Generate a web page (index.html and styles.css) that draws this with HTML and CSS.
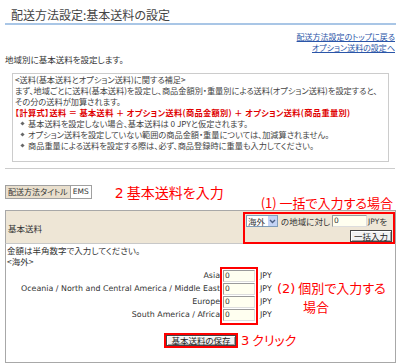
FILE: index.html
```html
<!DOCTYPE html>
<html lang="ja">
<head>
<meta charset="utf-8">
<title>配送方法設定:基本送料の設定</title>
<link rel="stylesheet" href="styles.css">
</head>
<body>
<div class="page">
  <h1 class="title">配送方法設定:基本送料の設定</h1>
  <div class="links">
    <a href="#">配送方法設定のトップに戻る</a><br>
    <a href="#">オプション送料の設定へ</a>
  </div>
  <p class="intro">地域別に基本送料を設定します。</p>
  <div class="note">
    <p>&lt;送料(基本送料とオプション送料)に関する補足&gt;</p>
    <p>まず、地域ごとに送料(基本送料)を設定し、商品金額別・重量別による送料(オプション送料)を設定すると、</p>
    <p>その分の送料が加算されます。</p>
    <p class="formula">【計算式】送料 ＝ 基本送料 ＋ オプション送料(商品金額別) ＋ オプション送料(商品重量別)</p>
    <ul class="bullets">
      <li>基本送料を設定しない場合、基本送料は 0 JPYと仮定されます。</li>
      <li>オプション送料を設定していない範囲の商品金額・重量については、加減算されません。</li>
      <li>商品重量による送料を設定する際は、必ず、商品登録時に重量も入力してください。</li>
    </ul>
  </div>
  <hr class="sep">
  <div class="tabrow">
    <span class="tab tab-label">配送方法タイトル</span><span class="tab tab-value latin">EMS</span>
    <span class="anno anno-2"><span class="num">2</span> 基本送料を入力</span>
  </div>
  <div class="form">
    <div class="anno anno-1">(1) 一括で入力する場合</div>
    <div class="form-head">
      <span class="head-label">基本送料</span>
      <div class="bulk">
        <div class="bulk-row">
          <span class="select"><span class="select-text">海外</span><span class="select-arrow"><svg width="7" height="5" viewBox="0 0 7 5"><path d="M1 1 L3.5 3.5 L6 1" fill="none" stroke="#4d6185" stroke-width="1.4"/></svg></span></span>
          <span class="bulk-text">の地域に対し</span>
          <span class="field bulk-field latin">0</span>
          <span class="latin jpy-text">JPY</span><span class="bulk-wo">を</span>
        </div>
        <div class="bulk-row bulk-row-btn">
          <button class="btn" type="button">一括入力</button>
        </div>
      </div>
    </div>
    <div class="form-body">
      <p>金額は半角数字で入力してください。</p>
      <p>&lt;海外&gt;</p>
      <div class="rates">
        <div class="rate-labels latin">
          <span>Asia</span>
          <span>Oceania / North and Central America / Middle East</span>
          <span>Europe</span>
          <span>South America / Africa</span>
        </div>
        <div class="rate-fields">
          <span class="field latin">0</span>
          <span class="field latin">0</span>
          <span class="field latin">0</span>
          <span class="field latin">0</span>
        </div>
        <div class="rate-units latin">
          <span>JPY</span>
          <span>JPY</span>
          <span>JPY</span>
          <span>JPY</span>
        </div>
      </div>
      <div class="anno anno-3"><span class="num">(2)</span> 個別で入力する<br>場合</div>
      <div class="save-row">
        <span></span>
        <span class="save-frame"><button class="btn btn-save" type="button">基本送料の保存</button></span>
        <span class="anno anno-4"><span class="num">3</span> クリック</span>
      </div>
    </div>
  </div>
</div>
</body>
</html>
```

FILE: styles.css
```css
html, body {
  margin: 0;
  padding: 0;
}
body {
  width: 400px;
  height: 364px;
  overflow: hidden;
  background: #ffffff;
  color: #333333;
  font-family: "Noto Sans CJK JP", sans-serif;
  font-size: 8.5px;
  line-height: 11px;
  font-feature-settings: "palt" 1;
}
p {
  margin: 0;
}
.latin {
  font-family: "DejaVu Sans", sans-serif;
  font-feature-settings: normal;
}
.title {
  margin: 0 4px 0 5px;
  padding: 7px 0 0 6px;
  height: 16px;
  font-size: 12px;
  line-height: 16px;
  font-weight: normal;
  color: #444444;
  border-bottom: 2px solid #a9c6e6;
}
.links {
  margin: 6px 5px 0 0;
  text-align: right;
  font-size: 8px;
}
.links a {
  color: #2a55a8;
  text-decoration: underline;
}
.intro {
  margin: 1px 0 0 5px;
}
.note {
  margin: 8px 11px 0 12px;
  padding: 0 2px 10px 2px;
  border: 1px solid #cccccc;
  color: #444444;
  white-space: nowrap;
  font-size: 8.2px;
}
.formula {
  color: #e00000;
  font-weight: bold;
  letter-spacing: 0.35px;
}
.bullets {
  margin: 0;
  padding: 0;
  list-style: none;
}
.bullets li {
  position: relative;
  padding-left: 13px;
}
.bullets li::before {
  content: "";
  position: absolute;
  left: 6px;
  top: 4px;
  width: 3px;
  height: 3px;
  background: #666666;
  transform: rotate(45deg);
}
.sep {
  margin: 6px 5px 0 5px;
  height: 0;
  border: 0;
  border-top: 1px solid #cccccc;
}
.tabrow {
  display: flex;
  align-items: center;
  height: 14px;
  margin: 16px 0 0 5px;
}
.tab {
  box-sizing: border-box;
  height: 14px;
  line-height: 12px;
  padding: 0 2px;
  border: 1px solid #a0a0a0;
  color: #333333;
}
.tab-label {
  background: #e9dfcd;
  font-size: 8px;
}
.tab-value {
  border-left: 0;
  background: #ffffff;
  font-size: 7.5px;
}
.anno {
  color: #ff0000;
  font-size: 13px;
  line-height: 18px;
  white-space: nowrap;
}
.num {
  font-family: "DejaVu Sans", sans-serif;
}
.anno-2 {
  margin-left: 23px;
  font-size: 14px;
}
.form {
  position: relative;
  margin: 11px 4px 0 5px;
}
.anno-1 {
  position: absolute;
  right: 3px;
  top: -16px;
}
.form-head {
  display: flex;
  justify-content: space-between;
  height: 32px;
  background: #eee6d6;
  border: 1px solid #a8a8a8;
  border-bottom-color: #c8c8c8;
}
.head-label {
  align-self: center;
  margin-left: 2px;
  margin-top: 2px;
}
.bulk {
  box-sizing: border-box;
  margin-top: 1px;
  width: 152px;
  height: 32px;
  padding: 1px 0 0 1px;
  border: 2px solid #ff0000;
  display: flex;
  flex-direction: column;
  gap: 3px;
}
.bulk-row {
  display: flex;
  align-items: center;
  height: 12px;
  white-space: nowrap;
}
.bulk-row-btn {
  justify-content: flex-end;
  padding-right: 1px;
}
.select {
  box-sizing: border-box;
  display: flex;
  width: 32px;
  height: 12px;
  border: 1px solid #7f9db9;
  background: #ffffff;
}
.select-text {
  flex: 1;
  padding-left: 1px;
  line-height: 10px;
}
.select-arrow {
  width: 9px;
  display: flex;
  align-items: center;
  justify-content: center;
  background: #c3d3f5;
}
.bulk-text {
  margin-left: 3px;
}
.field {
  box-sizing: border-box;
  display: block;
  width: 32px;
  height: 12px;
  padding-left: 1px;
  background: #fffff0;
  border: 1px solid #9a9a9a;
  border-right-color: #dddddd;
  border-bottom-color: #dddddd;
  font-size: 7.5px;
  line-height: 10px;
  color: #333333;
}
.bulk-field {
  width: 35px;
  margin-left: 2px;
}
.jpy-text {
  margin-left: 1px;
  font-size: 7.5px;
}
.btn {
  box-sizing: border-box;
  height: 12px;
  padding: 0 3px;
  margin: 0;
  background: #f2f2f2;
  border: 1px solid #444444;
  box-shadow: inset 1px 1px #ffffff, inset -1px -1px #a0a0a0;
  font-family: "Noto Sans CJK JP", sans-serif;
  font-feature-settings: "palt" 1;
  font-size: 8.5px;
  line-height: 9px;
  color: #222222;
}
.form-body {
  position: relative;
  height: 119px;
  padding: 1px 0 0 1px;
  border: 1px solid #a8a8a8;
  border-top: 0;
  box-sizing: border-box;
}
.rates {
  display: flex;
}
.rate-labels,
.rate-units {
  display: flex;
  flex-direction: column;
  padding-top: 2px;
  font-size: 7.9px;
}
.rate-labels span,
.rate-units span {
  height: 13px;
  line-height: 13px;
}
.rate-labels {
  width: 213px;
  text-align: right;
}
.rate-fields {
  display: flex;
  flex-direction: column;
  gap: 1px;
  padding: 1px 1px 0;
  height: 53px;
  border: 2px solid #ff0000;
}
.rate-fields .field {
  height: 12px;
}
.rate-units {
  margin-left: 2px;
}
.anno-3 {
  position: absolute;
  left: 271px;
  top: 35px;
  padding-left: 26px;
  text-indent: -26px;
}
.save-row {
  display: grid;
  grid-template-columns: 1fr auto 1fr;
  align-items: center;
  margin-top: 6px;
}
.save-frame {
  display: flex;
  border: 2px solid #ff0000;
}
.btn-save {
  width: 70px;
  height: 11px;
  padding: 0;
}
.anno-4 {
  margin-left: 3px;
}
```
